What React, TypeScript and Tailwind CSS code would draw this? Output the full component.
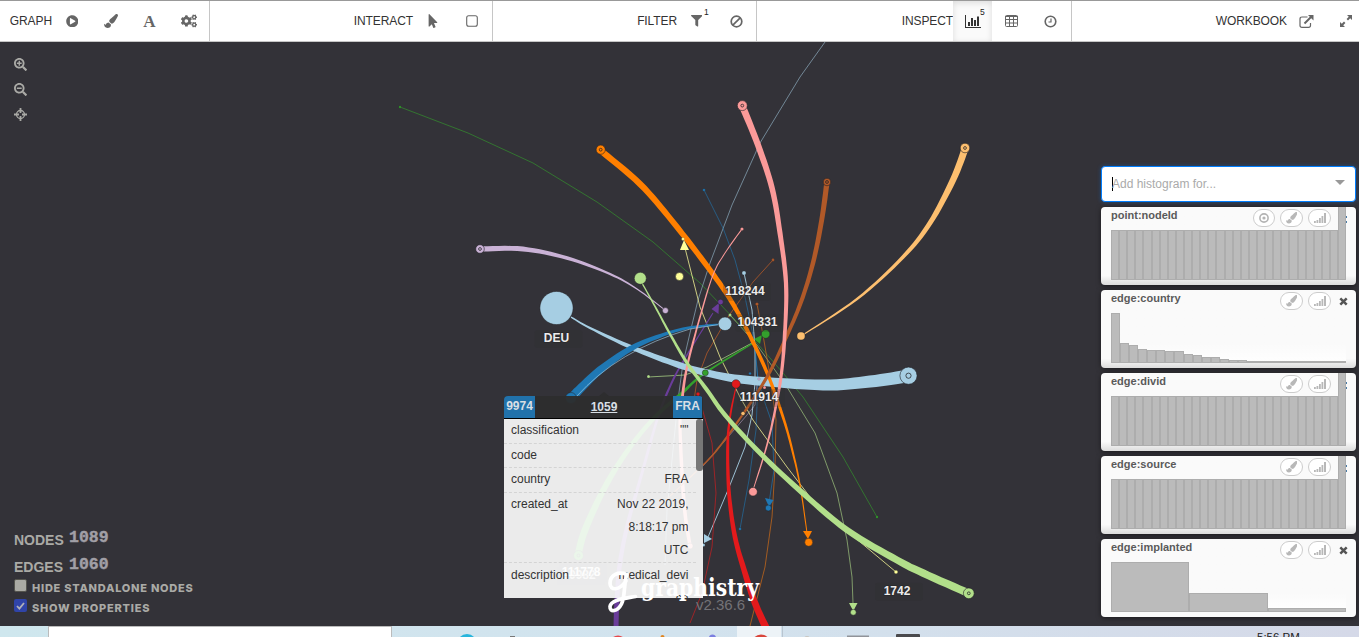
import React from "react";
import { FaPlayCircle, FaPaintBrush, FaCogs, FaMousePointer, FaFilter, FaSearchPlus, FaSearchMinus } from "react-icons/fa";

type Pt = [number, number, number];

/* Samples a Catmull-Rom spline through the points and outlines it with a varying width. */
function ribbon(pts: Pt[], scale: number): string {
  const s: Pt[] = [];
  for (let i = 0; i < pts.length - 1; i++) {
    const p0 = pts[Math.max(0, i - 1)];
    const p1 = pts[i];
    const p2 = pts[i + 1];
    const p3 = pts[Math.min(pts.length - 1, i + 2)];
    for (let k = 0; k < 8; k++) {
      const t = k / 8;
      const f = (j: number) =>
        0.5 * (2 * p1[j] + (p2[j] - p0[j]) * t + (2 * p0[j] - 5 * p1[j] + 4 * p2[j] - p3[j]) * t * t + (3 * p1[j] - p0[j] - 3 * p2[j] + p3[j]) * t * t * t);
      s.push([f(0), f(1), p1[2] + (p2[2] - p1[2]) * t]);
    }
  }
  s.push(pts[pts.length - 1]);
  const left: string[] = [];
  const right: string[] = [];
  s.forEach((p, i) => {
    const a = s[Math.max(0, i - 1)];
    const b = s[Math.min(s.length - 1, i + 1)];
    const dx = b[0] - a[0];
    const dy = b[1] - a[1];
    const l = Math.hypot(dx, dy) || 1;
    const w = Math.max(1, p[2] * scale) / 2;
    const nx = (-dy / l) * w;
    const ny = (dx / l) * w;
    left.push(`${(p[0] + nx).toFixed(1)},${(p[1] + ny).toFixed(1)}`);
    right.unshift(`${(p[0] - nx).toFixed(1)},${(p[1] - ny).toFixed(1)}`);
  });
  return `M${left.join("L")}L${right.join("L")}Z`;
}

const thin: { c: string; o: number; p: [number, number][] }[] = [
  { c: "#33a02c", o: 0.6, p: [[400, 107], [468, 133], [533, 163], [597, 202], [653, 242], [700, 283], [757, 343], [783, 373], [803, 397], [843, 457], [877, 517]] },
  { c: "#b2df8a", o: 0.6, p: [[730, 315], [757, 345], [787, 387], [815, 433], [837, 493], [847, 540], [852, 577], [853, 603]] },
  { c: "#a6cee3", o: 0.55, p: [[825, 42], [800, 77], [760, 143], [732, 205], [710, 263], [698, 300], [690, 333], [683, 363], [678, 400], [673, 450], [667, 510], [665, 565]] },
  { c: "#1f78b4", o: 0.6, p: [[704, 190], [723, 228], [735, 260], [745, 297], [754, 340], [758, 380], [756, 430], [749, 480], [740, 529]] },
  { c: "#b15928", o: 0.8, p: [[773, 260], [753, 282], [728, 317], [707, 353], [697, 380], [693, 407]] },
  { c: "#c86a1a", o: 0.75, p: [[757, 304], [763, 335], [769, 370], [776, 420], [775, 467], [772, 517], [765, 567], [750, 626]] },
  { c: "#ffff99", o: 0.75, p: [[685, 248], [700, 307], [720, 357], [740, 397], [753, 420], [787, 467], [810, 497], [847, 531], [896, 572]] },
  { c: "#a6cee3", o: 0.9, p: [[744, 273], [752, 310], [755, 347], [755, 383], [752, 415], [745, 447], [728, 490], [708, 537]] },
  { c: "#1f78b4", o: 0.65, p: [[755, 347], [758, 380], [765, 403], [772, 423], [774, 470], [769, 503]] },
  { c: "#cab2d6", o: 0.5, p: [[757, 385], [755, 405], [747, 415], [703, 466]] },
  { c: "#e31a1c", o: 0.6, p: [[698, 394], [712, 443], [716, 493], [712, 547], [702, 593], [690, 623]] },
  { c: "#b2df8a", o: 0.7, p: [[648, 377], [685, 375], [707, 367], [752, 343]] },
];

const thick: { c: string; k?: number; p: Pt[] }[] = [
  { c: "#6a3d9a", k: 1, p: [[616, 627, 5], [617, 600, 5], [620, 563, 4.5], [628, 523, 4], [642, 473, 3], [658, 417, 2.5], [673, 380, 2], [690, 350, 1.4], [713, 313, 1]] },
  { c: "#33a02c", k: 1, p: [[578, 555, 7], [585, 530, 7], [605, 487, 6], [628, 450, 5], [655, 417, 4], [682, 393, 3], [705, 373, 2], [755, 342, 1.2]] },
  { c: "#a6cee3", k: 1, p: [[571, 317, 1.3], [590, 328, 2], [633, 348, 4.5], [673, 363, 6], [707, 373, 7], [747, 380, 8.5], [823, 385, 11], [870, 381.5, 12], [908, 376, 13]] },
  { c: "#1f78b4", k: 1, p: [[571, 398, 8], [577, 392, 9], [600, 370, 7.5], [630, 349, 5.5], [657, 337, 4], [687, 328, 2.5], [722, 324, 1.5]] },
  { c: "#ff7f00", k: 0.83, p: [[600, 150, 7.5], [640, 184, 7.5], [673, 222, 7], [710, 270, 6.5], [733, 304, 5.5], [753, 342, 4.7], [770, 380, 4], [783, 417, 3.3], [791, 445, 2.7], [800, 485, 1.8], [807, 533, 1]] },
  { c: "#fb9a99", k: 0.9, p: [[742, 229, 1], [725, 253, 1], [713, 275, 1.1], [700, 317, 1.8], [687, 367, 2.6], [682, 400, 3.3], [680, 423, 3.5], [682, 473, 4], [685, 513, 4], [690, 546, 4]] },
  { c: "#b15928", k: 0.9, p: [[827, 182, 6], [821.7, 220, 5.5], [813, 263, 5], [801, 302, 4.5], [785, 340, 4], [767, 377, 3.5], [741, 417, 2.5], [720, 446, 2], [703, 465, 1.5], [655, 510, 1]] },
  { c: "#fb9a99", k: 0.86, p: [[742.3, 106, 8], [758, 145, 7.2], [772, 188, 6.5], [780, 233, 5.8], [786, 283, 5], [785, 330, 4.4], [781, 377, 3.6], [773, 420, 2.6], [765, 452, 1.8], [753, 490, 1]] },
  { c: "#fdbf6f", k: 0.88, p: [[965, 149, 8], [953, 180, 7.2], [930, 223, 5.6], [903, 257, 4.2], [857, 299, 2.7], [801, 336, 1.2]] },
  { c: "#cab2d6", k: 0.9, p: [[480, 249, 6], [523, 249, 5.3], [567, 258, 4], [610, 274, 2.5], [637, 289, 1.6], [665, 310, 1]] },
  { c: "#e31a1c", k: 0.82, p: [[736, 387, 1.2], [730, 417, 2.5], [727.7, 447, 3.6], [729, 493, 4.6], [735, 537, 5.6], [745, 573, 6.8], [755, 603, 8], [766, 628, 9]] },
  { c: "#b2df8a", k: 0.88, p: [[642, 283, 1.3], [657, 310, 2], [670, 334, 2.7], [687, 363, 3.5], [707, 390, 4.5], [725, 415, 5], [757, 450, 5.5], [797, 488, 6], [847, 530, 7], [897, 560, 8], [923, 573, 8.5], [968, 593, 9]] },
];

const nodes: [number, number, number, string][] = [
  [400, 107, 1.2, "#33a02c"], [877, 517, 1.2, "#33a02c"], [704, 190, 1.3, "#1f78b4"], [742, 229, 1.6, "#fb9a99"],
  [773, 260, 1.4, "#b15928"], [744, 273, 2, "#a6cee3"], [757, 304, 1.6, "#b15928"], [730, 315, 1.5, "#b2df8a"],
  [683, 239, 1.5, "#ffff99"], [679.5, 276.5, 4, "#ffff99"], [640.3, 278.3, 6, "#b2df8a"], [556.5, 308, 16.6, "#a6cee3"],
  [665.4, 310.6, 3, "#cab2d6"], [720.5, 302, 2.8, "#6a3d9a"], [725, 323.8, 6.8, "#a6cee3"], [765.6, 334, 4.3, "#33a02c"],
  [801, 336, 4.1, "#fdbf6f"], [648.5, 376.5, 1.5, "#b2df8a"], [705.3, 372.8, 3, "#33a02c"], [736, 384, 4.3, "#e31a1c"],
  [698, 394, 1.8, "#e31a1c"], [743, 413.5, 2.1, "#fdbf6f"], [750, 373.5, 1.3, "#1f78b4"], [759, 379, 1.3, "#cab2d6"],
  [764.5, 387.5, 1.5, "#fb9a99"], [753, 491.7, 4.3, "#fb9a99"], [768.3, 508, 3, "#1f78b4"], [740, 529, 1.3, "#1f78b4"],
  [808.7, 542.3, 4, "#ff7f00"], [853.3, 612.3, 2.9, "#b2df8a"], [896, 572, 1.8, "#ffff99"], [703.5, 545, 1.6, "#a6cee3"],
  [690, 546, 3, "#fb9a99"], [571, 398, 5.5, "#1f78b4"],
];

const ringed: [number, number, number, string][] = [
  [742.3, 105.6, 5, "#fb9a99"], [600.7, 149.7, 4.6, "#ff7f00"], [965, 148, 4.8, "#fdbf6f"], [827, 182, 3.8, "#b15928"],
  [480, 249, 4.3, "#cab2d6"], [908.5, 375.7, 8.6, "#a6cee3"], [968.8, 593.3, 5.4, "#b2df8a"], [578.5, 555.5, 5, "#33a02c"],
];

const arrows: [string, string][] = [
  ["684,240 689,250 680,250", "#ffff99"],
  ["719,303 718.5,314 711.5,309", "#6a3d9a"],
  ["762,335 760,344 754,339", "#33a02c"],
  ["803,531 812,531 808,539", "#ff7f00"],
  ["849,603 857.5,603 853.3,611", "#b2df8a"],
  ["765,498 773.5,500 769,507", "#1f78b4"],
  ["704,534 712,539 704,543", "#a6cee3"],
];

const labels: [number, number, string][] = [
  [745, 294.7, "118244"], [757.5, 326, "104331"], [759, 401, "111914"], [556.5, 342, "DEU"], [897, 594.8, "1742"],
  [579, 579, "10982"], [581, 576, "111778"],
];

function Graph() {
  return (
    <svg className="absolute inset-0" width="1359" height="584" viewBox="0 42 1359 584">
      {thin.map((e, i) => (
        <polyline key={i} points={e.p.map((q) => q.join(",")).join(" ")} fill="none" stroke={e.c} strokeOpacity={e.o} strokeWidth="1" />
      ))}
      {thick.map((e, i) => <path key={i} d={ribbon(e.p, e.k ?? 1)} fill={e.c} />)}
      <path d="M576 397Q618 350 690 329L722 324" fill="none" stroke="#a6cee3" strokeWidth="0.9" opacity="0.7" />
      {arrows.map((a, i) => <polygon key={i} points={a[0]} fill={a[1]} />)}
      {nodes.map((n, i) => (
        <circle key={i} cx={n[0]} cy={n[1]} r={n[2]} fill={n[3]} stroke="#222226" strokeOpacity="0.55" strokeWidth={n[2] > 2 ? 0.9 : 0.3} />
      ))}
      {ringed.map((n, i) => (
        <g key={i}>
          <circle cx={n[0]} cy={n[1]} r={n[2]} fill={n[3]} stroke="#222226" strokeOpacity="0.6" />
          <circle cx={n[0]} cy={n[1]} r={n[2] > 8 ? 2.6 : 1.4} fill={n[3]} stroke="#222226" strokeOpacity="0.75" strokeWidth="1" />
        </g>
      ))}
      {labels.map((l, i) => (
        <g key={i}>
          <rect x={l[0] - 22} y={l[1] - 12} width="48" height="18" rx="3" fill="#2b2b2e" opacity="0.2" />
          <text x={l[0]} y={l[1]} textAnchor="middle" fill="#ececec" stroke="#222" strokeOpacity="0.5" strokeWidth="1.4" paintOrder="stroke" className="font-['Liberation_Sans',sans-serif] text-[12px] font-bold">
            {l[2]}
          </text>
        </g>
      ))}
    </svg>
  );
}

function Tool({ children, active, badge }: { children: React.ReactNode; active?: boolean; badge?: string }) {
  return (
    <div className={"relative flex h-full w-[39px] shrink-0 items-center justify-center " + (active ? "bg-[#fafafa] text-[#333] shadow-[inset_0_2px_6px_rgba(0,0,0,0.12)]" : "text-[#666]")}>
      {children}
      {badge && <span className="absolute top-[5px] left-[27px] text-[8.5px] leading-3 text-[#222]">{badge}</span>}
    </div>
  );
}

function Section({ label, className, children }: { label: string; className: string; children: React.ReactNode }) {
  return (
    <div className={"flex h-full shrink-0 items-center justify-end border-[#c6c6c6] pr-px " + className}>
      <span className="text-[12px] tracking-[-0.1px] text-[#333]">{label}</span>
      {children}
    </div>
  );
}

function BrushPill() {
  return (
    <span className="flex h-[18px] w-[23px] items-center justify-center rounded-full border border-[#ccc] bg-white text-[#b8b8b8]">
      <FaPaintBrush size={11.5} />
    </span>
  );
}

function Card({ title, bars, tall, target, flat }: { title: string; bars: number[]; tall?: boolean; target?: boolean; flat?: boolean }) {
  return (
    <div
      className={
        "relative flex h-[78px] w-[255px] flex-col overflow-hidden rounded-[4px] bg-linear-to-b from-[#fafafa] from-88% shadow-[0_1px_5px_rgba(0,0,0,0.5)] " +
        (flat ? "to-[#fafafa]" : "to-[#dcdcdc]")
      }
    >
      <div className="flex h-[23px] pl-[10px]">
        <span className="grow pt-[2px] text-[11px] leading-[13px] font-bold text-[#5a5a5a]">{title}</span>
        <div className="flex gap-[5px] pt-[2px]">
          {target && (
            <span className="flex h-[18px] w-[22px] items-center justify-center rounded-full border border-[#ccc] bg-white">
              <svg width="10" height="10" viewBox="0 0 10 10" fill="none" stroke="#b4b4b4"><circle cx="5" cy="5" r="4.1" strokeWidth="1.6" /><circle cx="5" cy="5" r="1.6" fill="#b4b4b4" stroke="none" /></svg>
            </span>
          )}
          <BrushPill />
          <span className="flex h-[18px] w-[23px] items-center justify-center rounded-full border border-[#ccc] bg-white">
            <svg width="12" height="10" viewBox="0 0 12 10" fill="#b8b8b8"><path d="M0 8h1.800v2H0zM2.500 7h1.800v3H2.500zM5 5h1.800v5H5zM7.500 3h1.800v7H7.500zM10 0h2v10H10z" /></svg>
          </span>
        </div>
        <div className="w-[25px] pt-[7px] pl-[8px]">
          {tall ? (
            <div className="mt-[2px] ml-[6px] h-[7px] w-[2px] border-y-2 border-[#4a7ba5]" />
          ) : (
            <svg width="9" height="9" viewBox="0 0 9 9"><path d="M1.300 1.300 7.700 7.700M7.700 1.300 1.300 7.700" stroke="#555" strokeWidth="2.500" /></svg>
          )}
        </div>
      </div>
      <div className="ml-[10px] flex h-[50px] w-[235px] items-end bg-linear-to-b from-transparent from-60% to-white">
        {bars.map((b, i) => (
          <div
            key={i}
            className={b <= 2 ? "min-w-0 flex-1 bg-[#adadad]" : "min-w-0 flex-1 border border-[#adadad] bg-[#bbb]"}
            style={{ height: b }}
          />
        ))}
      </div>
      {tall && <div className="absolute top-0 right-[10px] h-[24px] w-[8px] border-x border-[#adadad] bg-[#bbb]" />}
    </div>
  );
}

const full: number[] = Array(29).fill(50);
const country = [50, 20, 18, 14, 13, 13, 12, 12, 9, 8, 6, 6, 4, 3, 3, 2, 2, 2, 2, 2, 2, 2, 2, 2, 2, 2, 2, 2, 2];

function Row({ k, children, last }: { k: string; children?: React.ReactNode; last?: boolean }) {
  return (
    <div className={"flex min-h-[24.5px] justify-between pr-[7.5px] pl-[7px] leading-[23px] " + (last ? "pt-px" : "border-b border-dashed border-[#d4d4d4]")}>
      <span>{k}</span>
      <span className="text-right">{children}</span>
    </div>
  );
}

function Count({ label, value }: { label: string; value: string }) {
  return (
    <>
      <span className="w-[55px] pt-[5px] text-[14px] leading-4 font-bold">{label}</span>
      <span className="pt-px font-['Liberation_Mono',monospace] text-[16.5px] leading-[20px] font-bold text-[#a19fa6] [-webkit-text-stroke:0.4px_#a19fa6]">{value}</span>
    </>
  );
}

export default function App() {
  return (
    <div className="flex h-[637px] w-[1359px] flex-col overflow-hidden bg-[#333238] font-['Liberation_Sans',Arial,sans-serif]">
      <header className="flex h-[42px] shrink-0 overflow-hidden border-t border-b border-t-[#999] border-b-[#c6c6c6] bg-white">
        <Section label="GRAPH" className="w-[210px] border-r">
          <Tool><FaPlayCircle size={12.500} className="ml-px" /></Tool>
          <Tool><FaPaintBrush size={14} /></Tool>
          <Tool><span className="font-['Liberation_Serif',serif] text-[17px] leading-none font-bold">A</span></Tool>
          <Tool><FaCogs size={16} /></Tool>
        </Section>
        <Section label="INTERACT" className="w-[283px] border-r">
          <Tool><FaMousePointer size={14} /></Tool>
          <Tool><svg width="12" height="12" viewBox="0 0 12 12" fill="none" stroke="currentColor"><rect x="0.700" y="0.700" width="10.600" height="10.600" rx="2" strokeWidth="1.100" /></svg></Tool>
        </Section>
        <Section label="FILTER" className="w-[264px] border-r">
          <Tool badge="1"><FaFilter size={11.500} /></Tool>
          <Tool><svg className="ml-px" width="13" height="13" viewBox="0 0 13 13" fill="none" stroke="currentColor" strokeWidth="1.700"><circle cx="6.500" cy="6.500" r="5.300" /><path d="M2.800 10.200 10.200 2.800" /></svg></Tool>
        </Section>
        <Section label="INSPECT" className="w-[315px] border-r">
          <Tool active badge="5"><svg width="16" height="13" viewBox="0 0 16 13" fill="currentColor"><path d="M0 0h1v12h15v1H0zM3 7h2v4H3zM6 3h2v8H6zM9 5h2v6H9zM12 1.500h2V11h-2z" /></svg></Tool>
          <Tool><svg width="13" height="12" viewBox="0 0 13 12" fill="none" stroke="currentColor"><rect x="0.500" y="0.500" width="12" height="11" rx="1" /><path d="M0 1.500h13M0 4.500h13M0 8h13M4.500 1v11M8.500 1v11" /></svg></Tool>
          <Tool><svg width="13" height="13" viewBox="0 0 13 13" fill="none" stroke="currentColor"><circle cx="6.500" cy="6.500" r="5.300" strokeWidth="1.600" /><path d="M7 3.500V7H4.500" strokeWidth="1.200" /></svg></Tool>
        </Section>
        <Section label="WORKBOOK" className="w-[294px]">
          <Tool><svg width="15" height="13" viewBox="0 0 15 13" fill="none" stroke="currentColor"><path d="M8.500 2H3Q1 2 1 4v6.500Q1 12.300 3 12.300h6.500q2 0 2-1.800V8" strokeWidth="1.200" /><path d="M5.500 8.500 12 2" strokeWidth="2" /><path d="M9 0h5.500v5.500z" fill="currentColor" stroke="none" /></svg></Tool>
          <Tool><svg width="12" height="12" viewBox="0 0 12 12" fill="currentColor"><path d="M7 0h5v5l-1.800-1.800L8 5.400 6.600 4l2.200-2.200zM0 7l1.800 1.800L4 6.600 5.400 8l-2.200 2.200L5 12H0z" /></svg></Tool>
        </Section>
      </header>

      <main className="relative flex h-[584px] shrink-0 justify-between overflow-hidden">
        <Graph />

        <aside className="relative flex flex-col justify-between pt-[16px] pb-[8px] pl-[14px] text-[#aaaaa6]">
          <div className="flex w-[12px] flex-col items-center gap-[12px]">
            <FaSearchPlus size={13} className="shrink-0" />
            <FaSearchMinus size={13} className="shrink-0" />
            <svg className="shrink-0" width="13" height="13" viewBox="0 0 13 13" fill="none" stroke="currentColor"><circle cx="6.500" cy="6.500" r="4" strokeWidth="1.300" /><path d="M6.500 0v5M6.500 8v5M0 6.500h5M8 6.500h5" strokeWidth="1.800" /></svg>
          </div>
          <div className="flex flex-col">
            <div className="flex h-[27px] items-start">
              <Count label="NODES" value="1089" />
            </div>
            <div className="flex h-[24px] items-start">
              <Count label="EDGES" value="1060" />
            </div>
            <div className="flex h-[20px] items-start gap-[5px]">
              <span className="mt-px size-[13px] rounded-[2px] border border-[#55554f] bg-[#aaaaa4]" />
              <span className="pt-[3px] font-['Inter',sans-serif] text-[11px] leading-[14px] font-extrabold tracking-[0.750px]">HIDE STANDALONE NODES</span>
            </div>
            <div className="flex h-[20px] items-start gap-[5px]">
              <span className="mt-px flex size-[13px] items-center justify-center rounded-[2px] bg-[#3044a8]">
                <svg width="9" height="8" viewBox="0 0 9 8"><path d="M1 4l2.400 2.600L8 1" fill="none" stroke="#b0b0b8" strokeWidth="1.800" /></svg>
              </span>
              <span className="pt-[3px] font-['Inter',sans-serif] text-[11px] leading-[14px] font-extrabold tracking-[0.800px]">SHOW PROPERTIES</span>
            </div>
          </div>
        </aside>

        <div className="absolute top-[354px] left-[504px] w-[199px] text-[12px]">
          <svg className="absolute -top-[4px] left-[95px]" width="10" height="4" viewBox="0 0 10 4"><path d="M5 0l5 4H0z" fill="#2d2d2f" /></svg>
          <div className="flex h-[23px] items-start justify-between overflow-hidden rounded-t-[4px] border-b border-black bg-[#2d2d2d]/95 leading-[20px] font-bold text-[#d8dfe5]">
            <span className="h-[22px] w-[31px] bg-[#2172ab] text-center">9974</span>
            <span className="pt-px underline">1059</span>
            <span className="mr-px h-[22px] w-[29px] bg-[#2172ab] text-center">FRA</span>
          </div>
          <div className="flex h-[179px] items-start overflow-hidden bg-white/90 text-[#333]">
            <div className="flex w-[192px] flex-col">
              <Row k="classification">""</Row>
              <Row k="code" />
              <Row k="country">FRA</Row>
              <Row k="created_at">Nov 22 2019,<br />8:18:17 pm<br />UTC</Row>
              <Row k="description" last>medical_devi<br />ce</Row>
            </div>
            <div className="h-[52px] w-[7px] shrink-0 rounded-[3px] bg-[#777]" />
          </div>
        </div>

        <svg className="absolute top-[526px] left-[604px]" width="164" height="50" viewBox="604 568 164 50">
          <path d="M627 574.500C618 571 610.500 575 610 583C610 591 619 591 626 581M627 574.500C623.500 583 625.500 596 621.500 604C617.500 612 609.500 612.500 610 606.500C611 600 621 599 635.500 596.500" fill="none" stroke="#fff" strokeWidth="3.700" strokeLinecap="round" strokeLinejoin="round" />
          <text x="641" y="595.500" textLength="118" lengthAdjust="spacingAndGlyphs" fill="#fff" className="font-['DejaVu_Serif',serif] text-[24px] font-bold">graphistry</text>
          <text x="696" y="610" fill="#737277" className="font-['Liberation_Sans',sans-serif] text-[15px]">v2.36.6</text>
        </svg>

        <aside className="relative flex w-[258px] flex-col gap-[5px] pt-[124px]">
          <div className="flex h-[36px] w-[255px] shrink-0 items-center justify-between rounded-[4px] border border-[#007eff] bg-white pr-[10px] pl-[10px] shadow-[0_0_4px_rgba(0,126,255,0.35)]">
            <div className="flex items-center text-[12px] text-[#aaa]">
              <span className="-mr-px h-[14px] w-px bg-black" />
              Add histogram for...
            </div>
            <svg className="-mt-[3px]" width="10" height="5" viewBox="0 0 10 5"><path d="M0 0h10L5 5z" fill="#999" /></svg>
          </div>
          <Card title="point:nodeId" bars={full} tall target />
          <Card title="edge:country" bars={country} />
          <Card title="edge:divid" bars={full} tall />
          <Card title="edge:source" bars={full} tall />
          <Card title="edge:implanted" bars={[50, 19, 4]} flat />
        </aside>
      </main>

      <footer className="relative flex h-[11px] shrink-0 overflow-hidden bg-linear-to-r from-[#cfe7ee] via-[#d2e3ee] to-[#d5d9e8]">
        <div className="ml-[48px] h-[20px] w-[344px] shrink-0 border border-[#bbb] bg-white" />
        <svg className="shrink-0" width="560" height="11" viewBox="392 626 560 11">
          <rect x="737" y="626" width="44" height="11" fill="#edf3f7" />
          <rect x="782" y="626" width="1" height="11" fill="#b9c5d0" />
          <circle cx="467" cy="644" r="10" fill="#27b5dc" />
          <rect x="510" y="636" width="5" height="1" fill="#777" />
          <circle cx="618" cy="644" r="8.500" fill="#e8474b" />
          <circle cx="662.500" cy="637" r="2" fill="#e0851f" />
          <circle cx="712.500" cy="638" r="3.500" fill="#7b7fe0" />
          <circle cx="761" cy="644" r="9.500" fill="#d9443a" />
          <circle cx="807" cy="639" r="3" fill="#c9c6c0" />
          <rect x="847" y="635.500" width="22" height="2" fill="#909399" />
          <rect x="896" y="634" width="24" height="5" rx="1" fill="#4a4a4d" />
        </svg>
        <span className="ml-[305px] pt-[4px] text-[11.5px] leading-[14px] whitespace-nowrap text-[#222]">5:56 PM</span>
      </footer>
    </div>
  );
}
